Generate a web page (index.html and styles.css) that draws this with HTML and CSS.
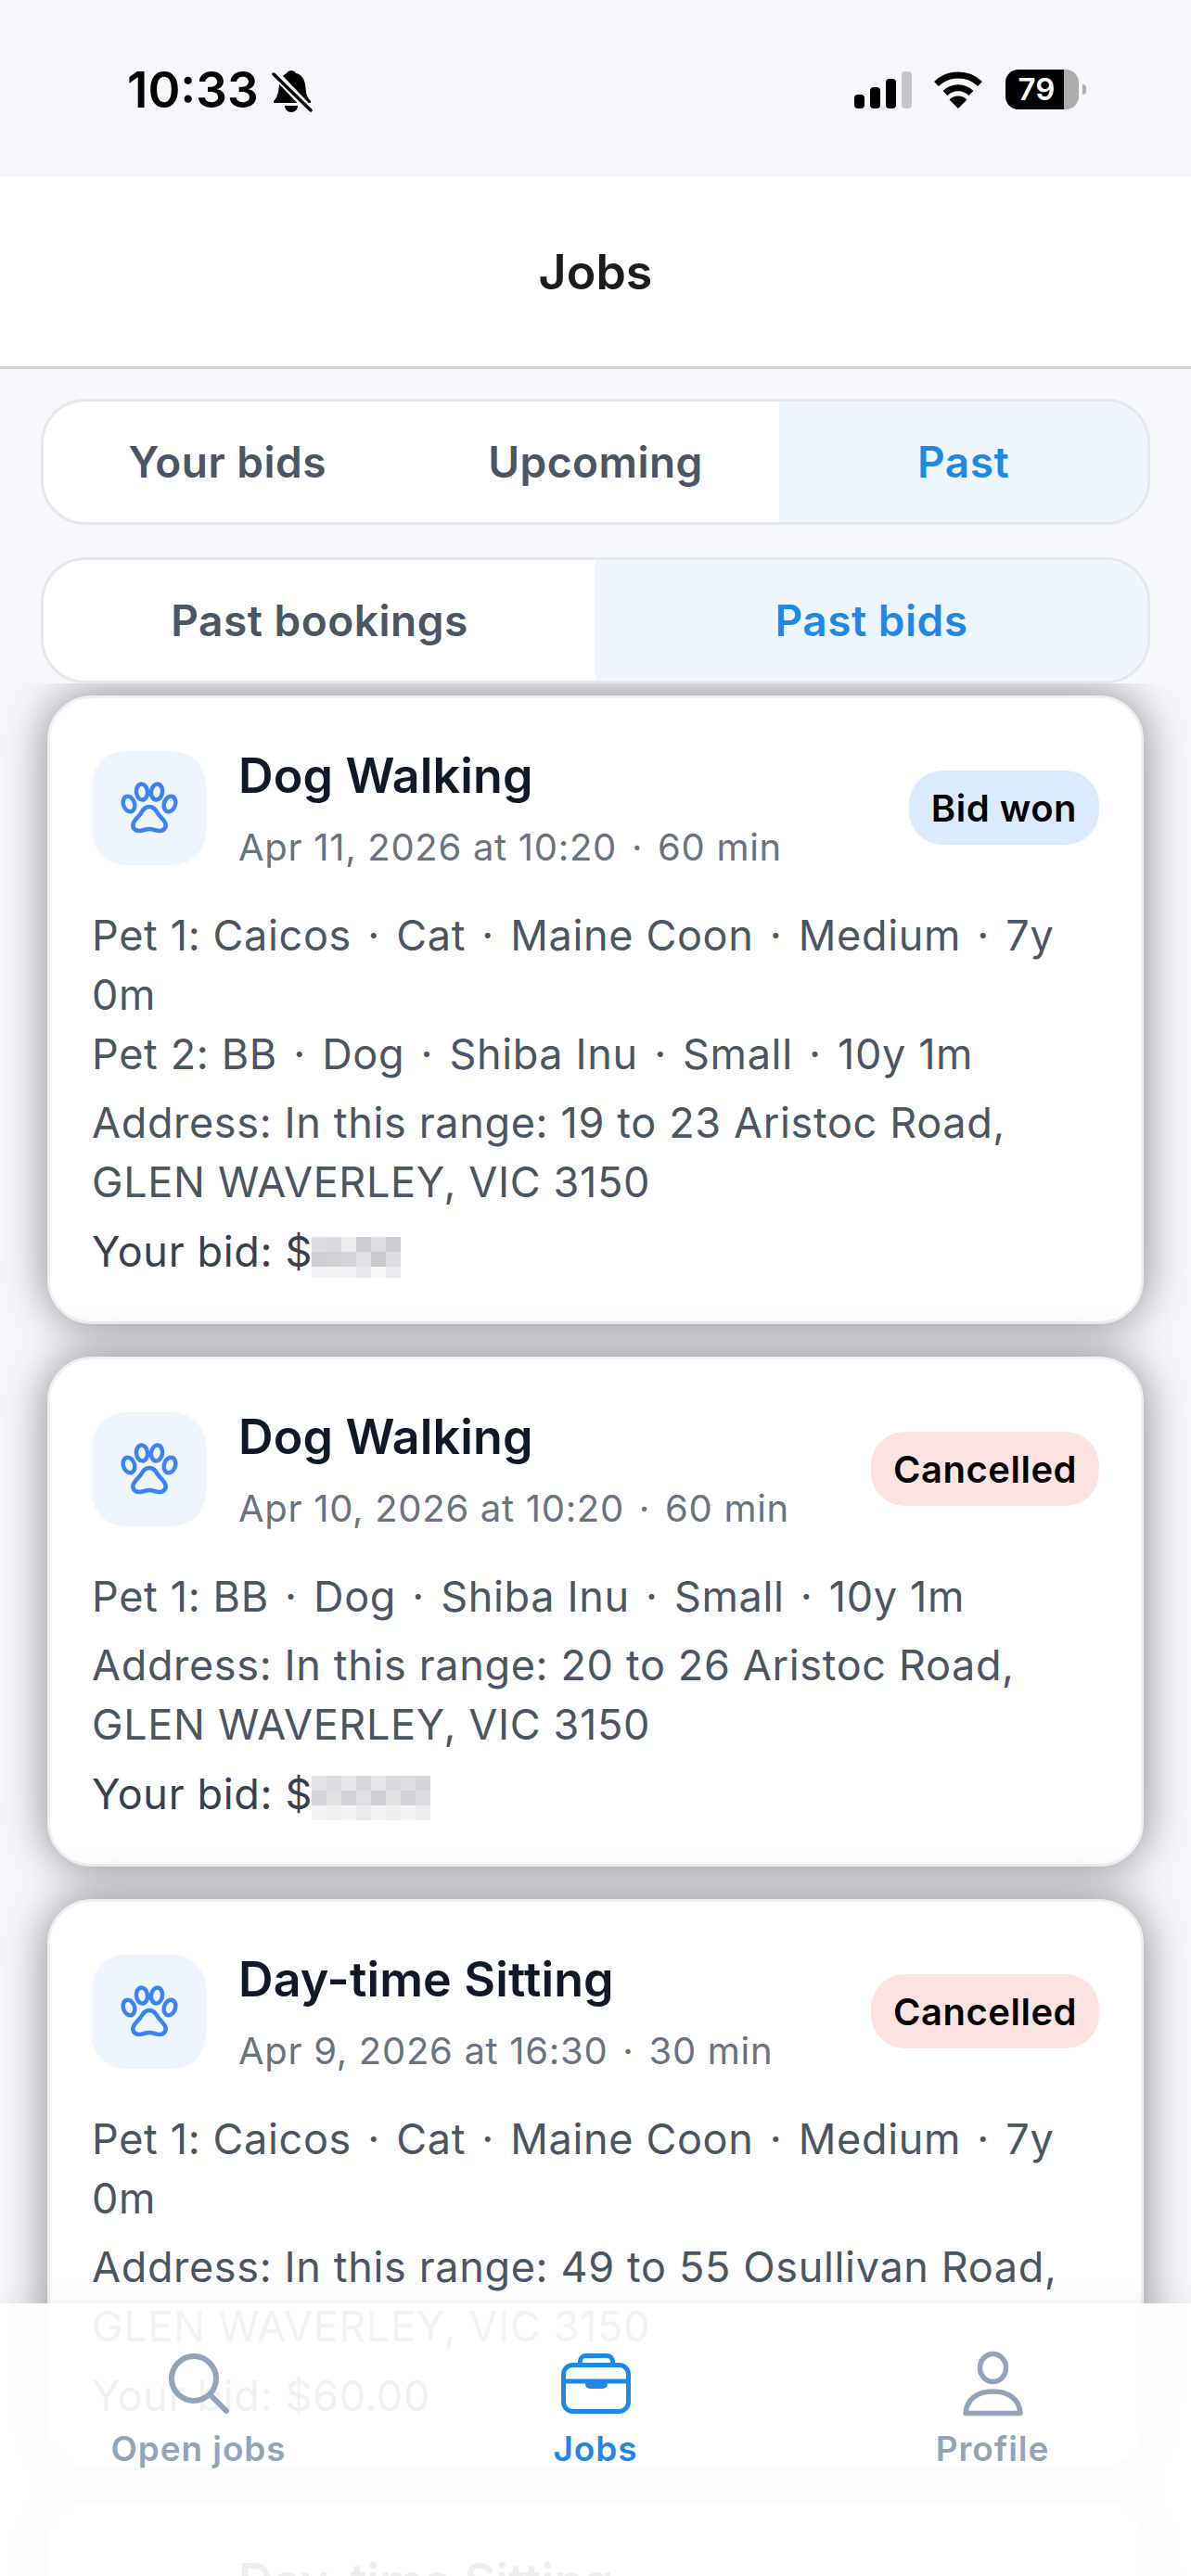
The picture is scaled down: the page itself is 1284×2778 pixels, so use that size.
FILE: index.html
```html
<!DOCTYPE html>
<html lang="en">
<head>
    <meta charset="UTF-8">
    <meta name="viewport" content="width=device-width, initial-scale=1.0">
    <title>Jobs</title>
    <link rel="stylesheet" href="styles.css">
</head>
<body>
    <div class="screen">
        <div class="status-bar">
            <div class="status-left">
                <span class="time">10:33</span>
                <svg class="bell" width="44" height="48" viewBox="0 0 44 48">
                    <path d="M21 1c2 0 4 1 5 3 6 1 9 6 10 12l1 8c.5 4 2 7 5 10v2H2v-2c3-3 4-6 5-10l1-8c1-6 4-10 8-12 1-2 3-3 5-3z" fill="#000"/>
                    <path d="M14 39h14c0 4-3 7-7 7s-7-3-7-7z" fill="#000"/>
                    <path d="M5 6l36 38" stroke="#f5f7fb" stroke-width="9"/>
                    <path d="M2 5l40 39" stroke="#000" stroke-width="3.5" stroke-linecap="round"/>
                </svg>
            </div>
            <div class="status-right">
                <svg width="62" height="40" viewBox="0 0 62 40">
                    <rect x="0" y="25" width="11" height="15" rx="4" fill="#000"/>
                    <rect x="17" y="17" width="11" height="23" rx="4" fill="#000"/>
                    <rect x="34" y="8" width="11" height="32" rx="4" fill="#000"/>
                    <rect x="51" y="0" width="11" height="40" rx="4" fill="#c4c6cb"/>
                </svg>
                <svg class="wifi" width="54" height="40" viewBox="0 0 54 40">
                    <path d="M3.5 13.5a34 34 0 0 1 47 0" fill="none" stroke="#000" stroke-width="7"/>
                    <path d="M13 23.5a20 20 0 0 1 28 0" fill="none" stroke="#000" stroke-width="7"/>
                    <path d="M27 40L17.5 30.5a13.5 13.5 0 0 1 19 0z" fill="#000"/>
                </svg>
                <div class="battery">
                    <div class="battery-body"><span class="battery-level">79</span></div>
                    <div class="battery-nub"></div>
                </div>
            </div>
        </div>

        <div class="header">Jobs</div>

        <div class="tabs">
            <div class="segment">
                <div class="segment-item">Your bids</div>
                <div class="segment-item">Upcoming</div>
                <div class="segment-item active">Past</div>
            </div>
            <div class="segment">
                <div class="segment-item">Past bookings</div>
                <div class="segment-item active">Past bids</div>
            </div>
        </div>

        <div class="job-list">
            <div class="job-card">
                <div class="job-head">
                    <div class="job-icon">
                        <svg width="62" height="56" viewBox="0 0 62 56"><use href="#paw"/></svg>
                    </div>
                    <div class="job-heading">
                        <div class="job-title">Dog Walking</div>
                        <div class="job-meta">Apr 11, 2026 at 10:20 <span class="dot">·</span> 60 min</div>
                    </div>
                    <div class="badge badge-won">Bid won</div>
                </div>
                <div class="job-body">
                    <div>Pet 1: Caicos <span class="dot">·</span> Cat <span class="dot">·</span> Maine Coon <span class="dot">·</span> Medium <span class="dot">·</span> 7y 0m<br>Pet 2: BB <span class="dot">·</span> Dog <span class="dot">·</span> Shiba Inu <span class="dot">·</span> Small <span class="dot">·</span> 10y 1m</div>
                    <div>Address: In this range: 19 to 23 Aristoc Road, GLEN WAVERLEY, VIC 3150</div>
                    <div class="job-bid">Your bid: $<svg class="masked" width="96" height="44" viewBox="0 0 96 44">
                        <rect x="0" y="0" width="16" height="16" fill="#dcdde0"/><rect x="16" y="0" width="16" height="16" fill="#dadbde"/><rect x="32" y="0" width="16" height="16" fill="#ebecee"/><rect x="48" y="0" width="16" height="16" fill="#cdced2"/><rect x="64" y="0" width="16" height="16" fill="#dddee1"/><rect x="80" y="0" width="16" height="16" fill="#cecfd3"/>
                        <rect x="0" y="16" width="16" height="16" fill="#cfd0d4"/><rect x="16" y="16" width="16" height="16" fill="#d1d2d6"/><rect x="32" y="16" width="16" height="16" fill="#d5d6d9"/><rect x="48" y="16" width="16" height="16" fill="#e0e1e4"/><rect x="64" y="16" width="16" height="16" fill="#c8c9ce"/><rect x="80" y="16" width="16" height="16" fill="#dcdde0"/>
                        <rect x="0" y="32" width="16" height="12" fill="#f2f3f4"/><rect x="16" y="32" width="16" height="12" fill="#f2f4f3"/><rect x="32" y="32" width="16" height="12" fill="#f2f3f4"/><rect x="48" y="32" width="16" height="12" fill="#e8e9eb"/><rect x="64" y="32" width="16" height="12" fill="#fafafa"/><rect x="80" y="32" width="16" height="12" fill="#e9eaec"/>
                    </svg></div>
                </div>
            </div>

            <div class="job-card">
                <div class="job-head">
                    <div class="job-icon">
                        <svg width="62" height="56" viewBox="0 0 62 56"><use href="#paw"/></svg>
                    </div>
                    <div class="job-heading">
                        <div class="job-title">Dog Walking</div>
                        <div class="job-meta">Apr 10, 2026 at 10:20 <span class="dot">·</span> 60 min</div>
                    </div>
                    <div class="badge badge-cancelled">Cancelled</div>
                </div>
                <div class="job-body">
                    <div>Pet 1: BB <span class="dot">·</span> Dog <span class="dot">·</span> Shiba Inu <span class="dot">·</span> Small <span class="dot">·</span> 10y 1m</div>
                    <div>Address: In this range: 20 to 26 Aristoc Road, GLEN WAVERLEY, VIC 3150</div>
                    <div class="job-bid">Your bid: $<svg class="masked" width="128" height="48" viewBox="0 0 128 48">
                        <rect x="0" y="0" width="16" height="16" fill="#e2e3e5"/><rect x="16" y="0" width="16" height="16" fill="#dbdcdf"/><rect x="32" y="0" width="16" height="16" fill="#e6e7e9"/><rect x="48" y="0" width="16" height="16" fill="#d6d7da"/><rect x="64" y="0" width="16" height="16" fill="#e4e5e7"/><rect x="80" y="0" width="16" height="16" fill="#d9dadd"/><rect x="96" y="0" width="16" height="16" fill="#dedfe2"/><rect x="112" y="0" width="16" height="16" fill="#d4d5d8"/>
                        <rect x="0" y="16" width="16" height="16" fill="#d5d6d9"/><rect x="16" y="16" width="16" height="16" fill="#e0e1e3"/><rect x="32" y="16" width="16" height="16" fill="#d2d3d7"/><rect x="48" y="16" width="16" height="16" fill="#dfe0e3"/><rect x="64" y="16" width="16" height="16" fill="#d0d1d5"/><rect x="80" y="16" width="16" height="16" fill="#e1e2e4"/><rect x="96" y="16" width="16" height="16" fill="#d3d4d8"/><rect x="112" y="16" width="16" height="16" fill="#dcdde0"/>
                        <rect x="0" y="32" width="16" height="16" fill="#f1f2f3"/><rect x="16" y="32" width="16" height="16" fill="#eeeff0"/><rect x="32" y="32" width="16" height="16" fill="#f4f5f5"/><rect x="48" y="32" width="16" height="16" fill="#eaebed"/><rect x="64" y="32" width="16" height="16" fill="#f3f3f4"/><rect x="80" y="32" width="16" height="16" fill="#edeef0"/><rect x="96" y="32" width="16" height="16" fill="#f5f5f6"/><rect x="112" y="32" width="16" height="16" fill="#ebecee"/>
                    </svg></div>
                </div>
            </div>

            <div class="job-card">
                <div class="job-head">
                    <div class="job-icon">
                        <svg width="62" height="56" viewBox="0 0 62 56"><use href="#paw"/></svg>
                    </div>
                    <div class="job-heading">
                        <div class="job-title">Day-time Sitting</div>
                        <div class="job-meta">Apr 9, 2026 at 16:30 <span class="dot">·</span> 30 min</div>
                    </div>
                    <div class="badge badge-cancelled">Cancelled</div>
                </div>
                <div class="job-body">
                    <div>Pet 1: Caicos <span class="dot">·</span> Cat <span class="dot">·</span> Maine Coon <span class="dot">·</span> Medium <span class="dot">·</span> 7y 0m</div>
                    <div>Address: In this range: 49 to 55 Osullivan Road, GLEN WAVERLEY, VIC 3150</div>
                    <div class="job-bid">Your bid: $60.00</div>
                </div>
            </div>

            <div class="job-card">
                <div class="job-head">
                    <div class="job-icon">
                        <svg width="62" height="56" viewBox="0 0 62 56"><use href="#paw"/></svg>
                    </div>
                    <div class="job-heading">
                        <div class="job-title">Day-time Sitting</div>
                    </div>
                </div>
            </div>
        </div>

        <div class="bottom-nav">
            <div class="nav-item">
                <svg width="72" height="72" viewBox="0 0 72 72" fill="none" stroke="#94a3b8" stroke-width="6" stroke-linecap="round">
                    <circle cx="31" cy="30" r="24"/>
                    <path d="M48 47l18 18"/>
                </svg>
                <span>Open jobs</span>
            </div>
            <div class="nav-item active">
                <svg width="78" height="72" viewBox="0 0 78 72" fill="none" stroke="#1e88e5" stroke-width="5">
                    <rect x="4.500" y="15.500" width="70" height="50" rx="10"/>
                    <path d="M22.500 15v-3.500a6 6 0 0 1 6-6h23a6 6 0 0 1 6 6v3.500"/>
                    <path d="M4 33h71"/>
                    <path d="M28 33h24v3a5 5 0 0 1-5 5H33a5 5 0 0 1-5-5z" fill="#1e88e5" stroke="none"/>
                </svg>
                <span>Jobs</span>
            </div>
            <div class="nav-item">
                <svg width="72" height="72" viewBox="0 0 72 72" fill="none" stroke="#94a3b8" stroke-width="5.500" stroke-linejoin="round">
                    <ellipse cx="36.500" cy="18.500" rx="14" ry="15"/>
                    <path d="M7 67.500C8 52 20 44 36.500 44S65 52 66 67.500z"/>
                </svg>
                <span>Profile</span>
            </div>
        </div>
    </div>

    <svg class="defs" width="0" height="0">
        <symbol id="paw" viewBox="0 0 62 56">
            <g fill="none" stroke="#3b82f6" stroke-width="4.500">
                <ellipse cx="23" cy="11" rx="6" ry="8.500" transform="rotate(-6 23 11)"/>
                <ellipse cx="39" cy="11" rx="6" ry="8.500" transform="rotate(8 39 11)"/>
                <ellipse cx="9" cy="24" rx="6" ry="8.500" transform="rotate(-18 9 24)"/>
                <ellipse cx="53" cy="24" rx="6" ry="8.500" transform="rotate(18 53 24)"/>
                <path d="M31 27c-4 0-7 3-9 7-2 3-6 6-8 10-2 5 1 9 6 9 4 0 7-2 11-2s7 2 11 2c5 0 8-4 6-9-2-4-6-7-8-10-2-4-5-7-9-7z"/>
            </g>
        </symbol>
    </svg>
</body>
</html>
```

FILE: styles.css
```css
* {
    box-sizing: border-box;
}
body {
    margin: 0;
    font-family: Inter, "Noto Sans", sans-serif;
    background-color: #f5f7fb;
    color: #4b5563;
}
.screen {
    position: relative;
    display: flex;
    flex-direction: column;
    height: 2778px;
    overflow: hidden;
    background-color: #f5f7fb;
}
.defs {
    position: absolute;
}

/* status bar */
.status-bar {
    display: flex;
    justify-content: space-between;
    align-items: flex-start;
    height: 191px;
    padding: 75px 113px 0 137px;
}
.status-left {
    display: flex;
    align-items: flex-start;
    gap: 14px;
}
.time {
    font-size: 53px;
    font-weight: 600;
    line-height: 44px;
    color: #000;
}
.status-right {
    display: flex;
    align-items: flex-start;
    padding-top: 2px;
}
.wifi {
    margin-left: 23px;
}
.battery {
    display: flex;
    align-items: center;
    margin-left: 24px;
    margin-top: -2px;
}
.battery-body {
    width: 79px;
    height: 43px;
    border-radius: 14px;
    overflow: hidden;
    background: linear-gradient(to right, #000 63px, #adadad 63px);
}
.battery-level {
    display: block;
    width: 63px;
    padding-left: 4px;
    text-align: center;
    font-size: 33px;
    font-weight: 600;
    line-height: 43px;
    color: #fff;
}
.battery-nub {
    width: 4px;
    height: 11px;
    margin-left: 4px;
    border-radius: 0 4px 4px 0;
    background-color: #adadad;
}

/* header */
.header {
    display: flex;
    justify-content: center;
    align-items: center;
    height: 207px;
    background-color: #fff;
    border-bottom: 3px solid #cfd0d4;
    font-size: 52px;
    font-weight: 600;
    color: #1c1c1e;
}

/* segments */
.tabs {
    display: flex;
    flex-direction: column;
    gap: 35px;
    padding: 32px 44px 0;
}
.segment {
    display: flex;
    height: 136px;
    overflow: hidden;
    background-color: #fff;
    border: 3px solid #e5e7eb;
    border-radius: 48px;
}
.segment-item {
    flex: 1;
    display: flex;
    justify-content: center;
    align-items: center;
    font-size: 46px;
    font-weight: 600;
    letter-spacing: 0.5px;
    color: #4b5563;
}
.segment-item.active {
    background-color: #eef5fe;
    color: #1e88e5;
}

/* job cards */
.job-list {
    flex: 1;
    display: flex;
    flex-direction: column;
    gap: 35px;
    padding: 13px 51px 0;
    overflow: hidden;
}
.job-card {
    flex-shrink: 0;
    padding: 45px 45px 43px;
    background-color: #fff;
    border: 3px solid #eef0f3;
    border-radius: 48px;
    box-shadow: 0 0 50px rgba(0, 0, 0, 0.45);
}
.job-head {
    display: flex;
    align-items: center;
    height: 146px;
}
.job-icon {
    flex-shrink: 0;
    display: flex;
    justify-content: center;
    align-items: center;
    width: 123px;
    height: 123px;
    margin-right: 35px;
    border-radius: 36px;
    background-color: #eef5ff;
}
.job-heading {
    flex: 1;
    align-self: stretch;
}
.job-title {
    font-size: 52px;
    font-weight: 600;
    line-height: 78px;
    letter-spacing: 0.15px;
    color: #111827;
}
.job-meta {
    margin-top: 8px;
    font-size: 40px;
    line-height: 60px;
    letter-spacing: 0.7px;
    color: #6b7280;
}
.dot {
    margin: 0 4px;
}
.badge {
    display: flex;
    align-items: center;
    height: 80px;
    padding: 0 24px;
    border-radius: 36px;
    font-size: 40px;
    font-weight: 600;
    letter-spacing: 0.5px;
    color: #000;
}
.badge-won {
    background-color: #dbeafe;
}
.badge-cancelled {
    background-color: #fee2e2;
}
.job-body {
    display: flex;
    flex-direction: column;
    gap: 10px;
    margin-top: 33px;
    font-size: 45px;
    line-height: 64px;
    letter-spacing: 0.65px;
}
.job-bid {
    padding-top: 1px;
    color: #374151;
}
.masked {
    margin-left: -1px;
    vertical-align: -12px;
}

/* bottom nav */
.bottom-nav {
    position: absolute;
    left: 0;
    right: 0;
    bottom: 0;
    height: 294px;
    display: grid;
    grid-template-columns: repeat(3, 1fr);
    padding-top: 51px;
    background-color: rgba(255, 255, 255, 0.93);
    box-shadow: 0 -4px 30px rgba(0, 0, 0, 0.05);
}
.nav-item {
    display: flex;
    flex-direction: column;
    align-items: center;
    font-size: 37px;
    font-weight: 600;
    line-height: 44px;
    letter-spacing: 0.9px;
    color: #94a3b8;
}
.nav-item span {
    margin-top: 12px;
}
.nav-item.active {
    color: #1e88e5;
}
```
